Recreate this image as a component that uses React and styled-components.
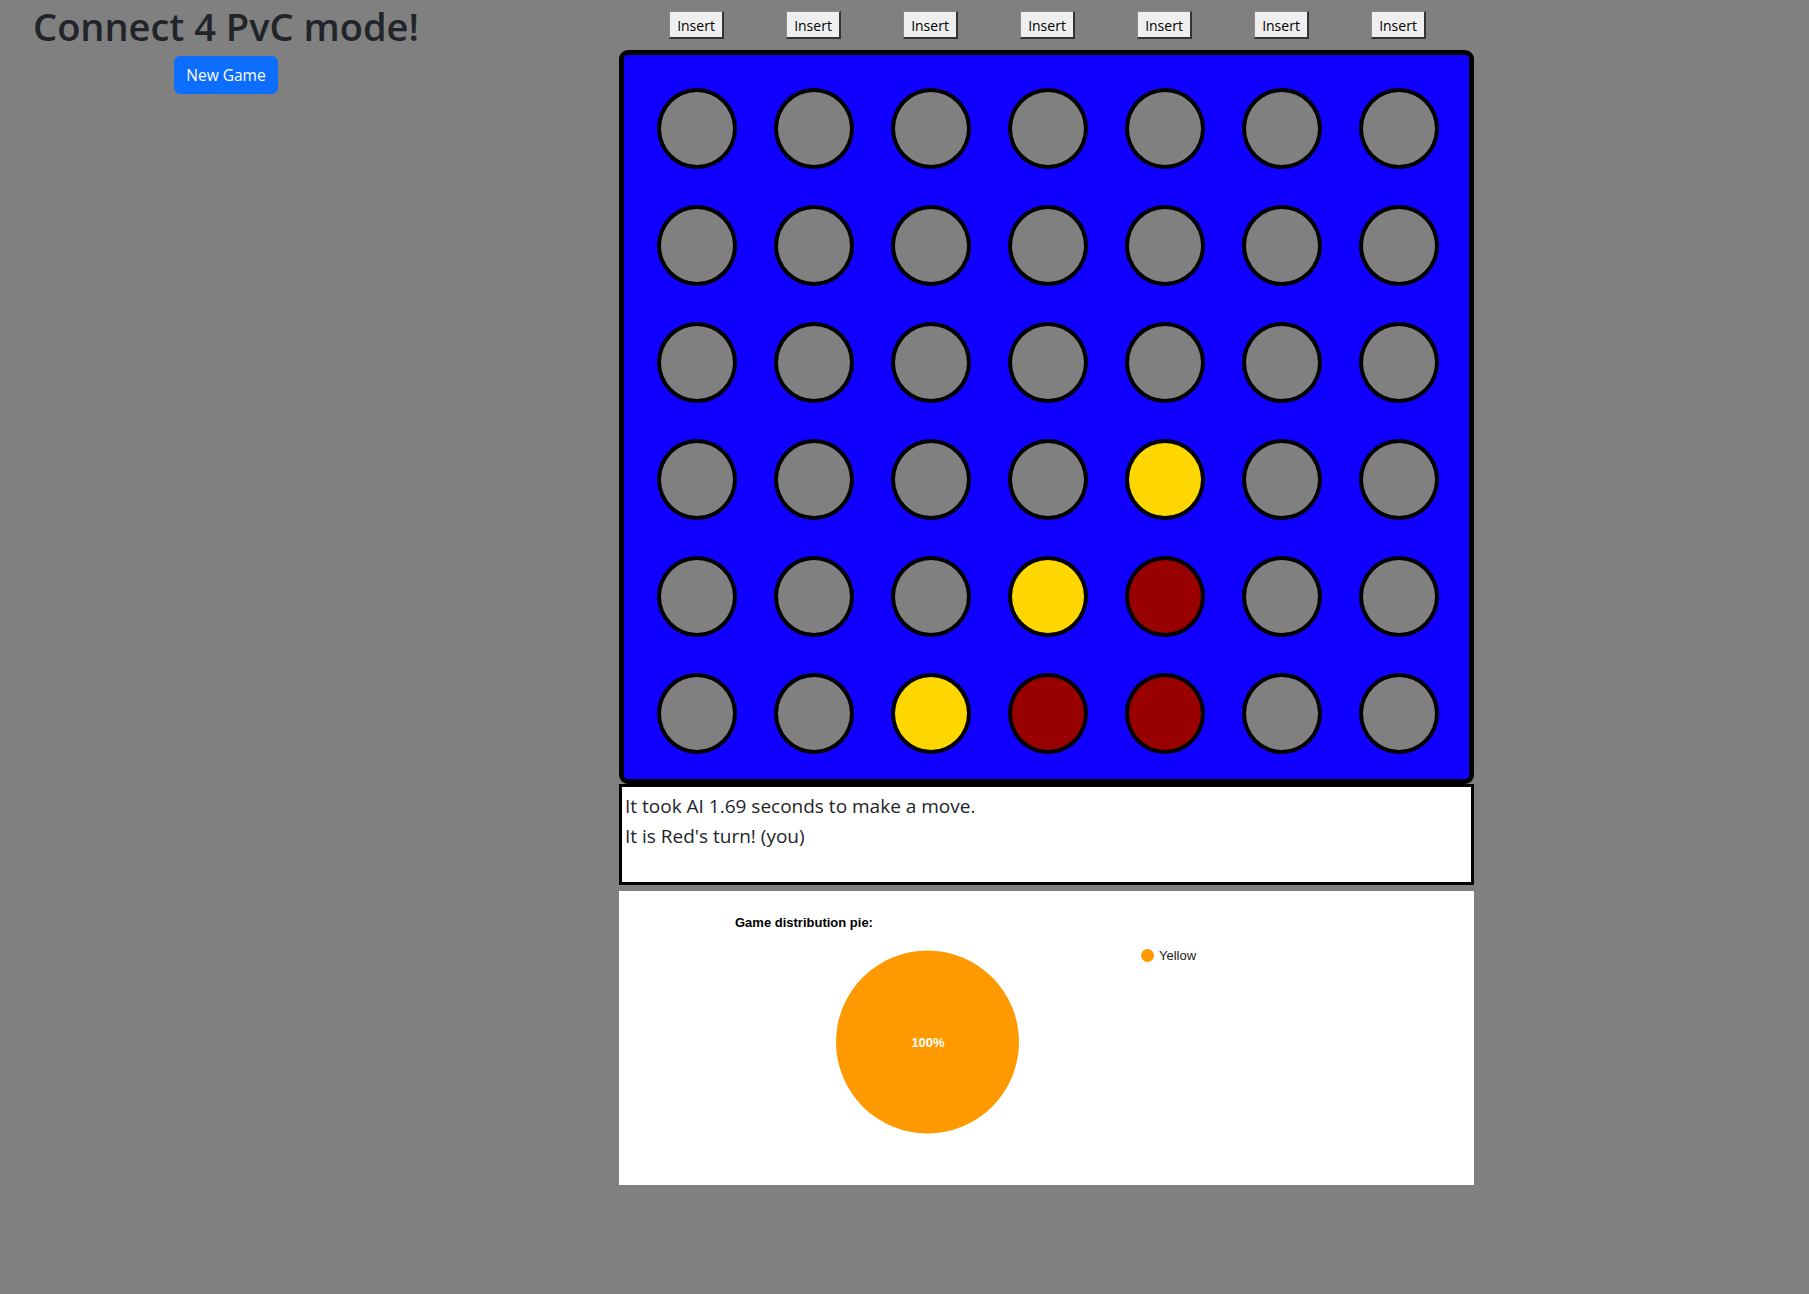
import styled, { createGlobalStyle } from "styled-components"

const GlobalStyle = createGlobalStyle`
    body {
        margin: 0;
        background-color: #808080;
        font-family: "Open Sans", "Noto Sans", sans-serif;
        color: #212529;
    }
`

const board = [
    [0, 0, 0, 0, 0, 0, 0],
    [0, 0, 0, 0, 0, 0, 0],
    [0, 0, 0, 0, 0, 0, 0],
    [0, 0, 0, 0, 2, 0, 0],
    [0, 0, 0, 2, 1, 0, 0],
    [0, 0, 2, 1, 1, 0, 0],
]

const discColors = ["#808080", "#990000", "#ffd700"]

const chartFont = "'Liberation Sans', Arial, sans-serif"

const PieChart = () => {
    return (
        <ChartBox>
            <svg width="855" height="294" viewBox="0 0 855 294">
                <text x="116" y="36" fontFamily={chartFont} fontSize="13" fontWeight="bold" fill="#000">
                    Game distribution pie:
                </text>
                <circle cx="308.5" cy="151" r="91.5" fill="#ff9900" />
                <text x="309" y="156" textAnchor="middle" fontFamily={chartFont} fontSize="13" fontWeight="bold" fill="#fff">
                    100%
                </text>
                <circle cx="528.5" cy="64.5" r="6.5" fill="#ff9900" />
                <text x="540" y="68.5" fontFamily={chartFont} fontSize="13" fill="#222">
                    Yellow
                </text>
            </svg>
        </ChartBox>
    )
}

const App = () => {
    return (
        <Page>
            <GlobalStyle />
            <SidePanel>
                <Title>Connect 4 PvC mode!</Title>
                <NewGameButton>New Game</NewGameButton>
            </SidePanel>

            <GameColumn>
                <InsertRow>
                    {board[0].map((_, col) => (
                        <InsertSlot key={col}>
                            <InsertButton>Insert</InsertButton>
                        </InsertSlot>
                    ))}
                </InsertRow>

                <Board>
                    {board.map((row, r) =>
                        row.map((cell, c) => (
                            <Cell key={`${r}-${c}`}>
                                <Disc color={discColors[cell]} />
                            </Cell>
                        ))
                    )}
                </Board>

                <StatusBox>
                    <StatusLine>It took AI 1.69 seconds to make a move.</StatusLine>
                    <StatusLine>It is Red's turn! (you)</StatusLine>
                </StatusBox>

                <PieChart />
            </GameColumn>
        </Page>
    )
}

export default App

const Page = styled.div`
    display: flex;
    align-items: flex-start;
    min-height: 1294px;
`

const SidePanel = styled.div`
    width: 452px;
    display: flex;
    flex-direction: column;
    align-items: center;
`

const Title = styled.h1`
    margin: 3px 0 6px;
    font-size: 38px;
    font-weight: 600;
    line-height: 47px;
    color: #212529;
`

const NewGameButton = styled.button`
    background-color: #0d6efd;
    color: white;
    border: 1px solid #0d6efd;
    border-radius: 6px;
    padding: 6px 11px;
    font-family: inherit;
    font-size: 15.5px;
    line-height: 24px;
    cursor: pointer;
`

const GameColumn = styled.div`
    margin-left: 167px;
    width: 855px;
    display: flex;
    flex-direction: column;
`

const InsertRow = styled.div`
    display: flex;
    padding: 11px 0 11px 19px;
`

const InsertSlot = styled.div`
    width: 117px;
    display: flex;
    justify-content: center;
`

const InsertButton = styled.button`
    height: 28px;
    width: 55px;
    padding: 2px 0 0;
    background-color: #efefef;
    border-style: solid;
    border-width: 1px 2px 2px 1px;
    border-color: #8a8a8a #333 #333 #8a8a8a;
    font-family: inherit;
    font-size: 14px;
    color: #000;
    cursor: pointer;
`

const Board = styled.div`
    box-sizing: border-box;
    width: 855px;
    display: grid;
    grid-template-columns: repeat(7, 117px);
    grid-auto-rows: 117px;
    padding: 15px 13px 7px 14px;
    background-color: #1000ff;
    border: 5px solid #000;
    border-radius: 9px;
`

const Cell = styled.div`
    display: flex;
    align-items: center;
    justify-content: center;
`

const Disc = styled.div`
    box-sizing: border-box;
    width: 80px;
    height: 81px;
    border-radius: 50%;
    border: 4px solid #000;
    background-color: ${(props) => props.color};
`

const StatusBox = styled.div`
    box-sizing: border-box;
    height: 101px;
    padding: 4px 3px 0;
    background-color: white;
    border: 3px solid #000;
`

const StatusLine = styled.p`
    margin: 0;
    font-size: 19px;
    line-height: 30px;
`

const ChartBox = styled.div`
    margin-top: 6px;
    height: 294px;
    background-color: white;

    svg {
        display: block;
    }
`
